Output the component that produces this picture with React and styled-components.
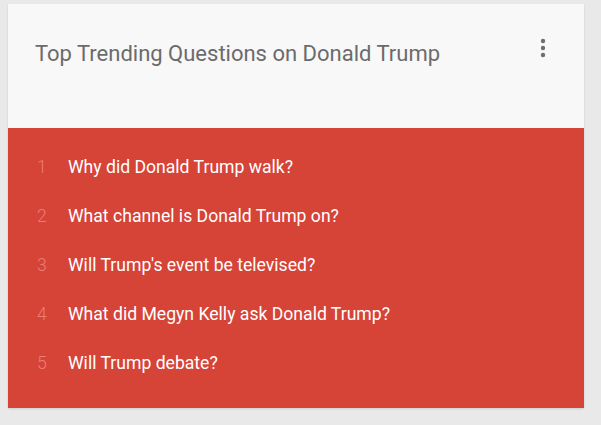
import styled, { createGlobalStyle } from 'styled-components'

const GlobalStyle = createGlobalStyle`
  html, body {
    margin: 0;
    padding: 0;
    background: #e9e9e9;
  }
  body {
    font-family: Roboto, "Liberation Sans", sans-serif;
  }
`

const Page = styled.div`
  width: 601px;
  height: 425px;
  padding: 4px 0 0 8px;
  box-sizing: border-box;
`

const Card = styled.div`
  width: 576px;
  height: 404px;
  display: flex;
  flex-direction: column;
  box-shadow: 0 1px 2px rgba(0, 0, 0, 0.12);
`

const Header = styled.div`
  height: 124px;
  background: #f8f8f8;
  display: flex;
  justify-content: space-between;
  align-items: flex-start;
  padding: 36px 38px 0 27px;
  box-sizing: border-box;
`

const Title = styled.h2`
  margin: 0;
  font-size: 22px;
  font-weight: 400;
  color: #6b6b6b;
  line-height: 28px;
`

const MenuButton = styled.button`
  border: none;
  background: none;
  padding: 0;
  margin-top: -2px;
  cursor: pointer;
  display: flex;
`

const List = styled.ol`
  flex: 1;
  margin: 0;
  padding: 27px 0 0 0;
  list-style: none;
  background: #d64337;
  display: flex;
  flex-direction: column;
`

const Item = styled.li`
  height: 49px;
  display: flex;
  align-items: flex-start;
  font-size: 17.6px;
  line-height: 24px;
`

const Rank = styled.span`
  width: 60px;
  padding-left: 29px;
  box-sizing: border-box;
  color: #ec7d73;
  font-weight: 300;
`

const Question = styled.span`
  color: #fff;
`

const questions = [
  'Why did Donald Trump walk?',
  'What channel is Donald Trump on?',
  "Will Trump's event be televised?",
  'What did Megyn Kelly ask Donald Trump?',
  'Will Trump debate?',
]

const App = () => {
  return (
    <Page>
      <GlobalStyle />
      <Card>
        <Header>
          <Title>Top Trending Questions on Donald Trump</Title>
          <MenuButton aria-label="more">
            <svg width="6" height="20" viewBox="0 0 6 20">
              <circle cx="3" cy="3" r="2.2" fill="#6e6e6e" />
              <circle cx="3" cy="10" r="2.2" fill="#6e6e6e" />
              <circle cx="3" cy="17" r="2.2" fill="#6e6e6e" />
            </svg>
          </MenuButton>
        </Header>
        <List>
          {questions.map((q, i) => (
            <Item key={i}>
              <Rank>{i + 1}</Rank>
              <Question>{q}</Question>
            </Item>
          ))}
        </List>
      </Card>
    </Page>
  )
}

export default App
